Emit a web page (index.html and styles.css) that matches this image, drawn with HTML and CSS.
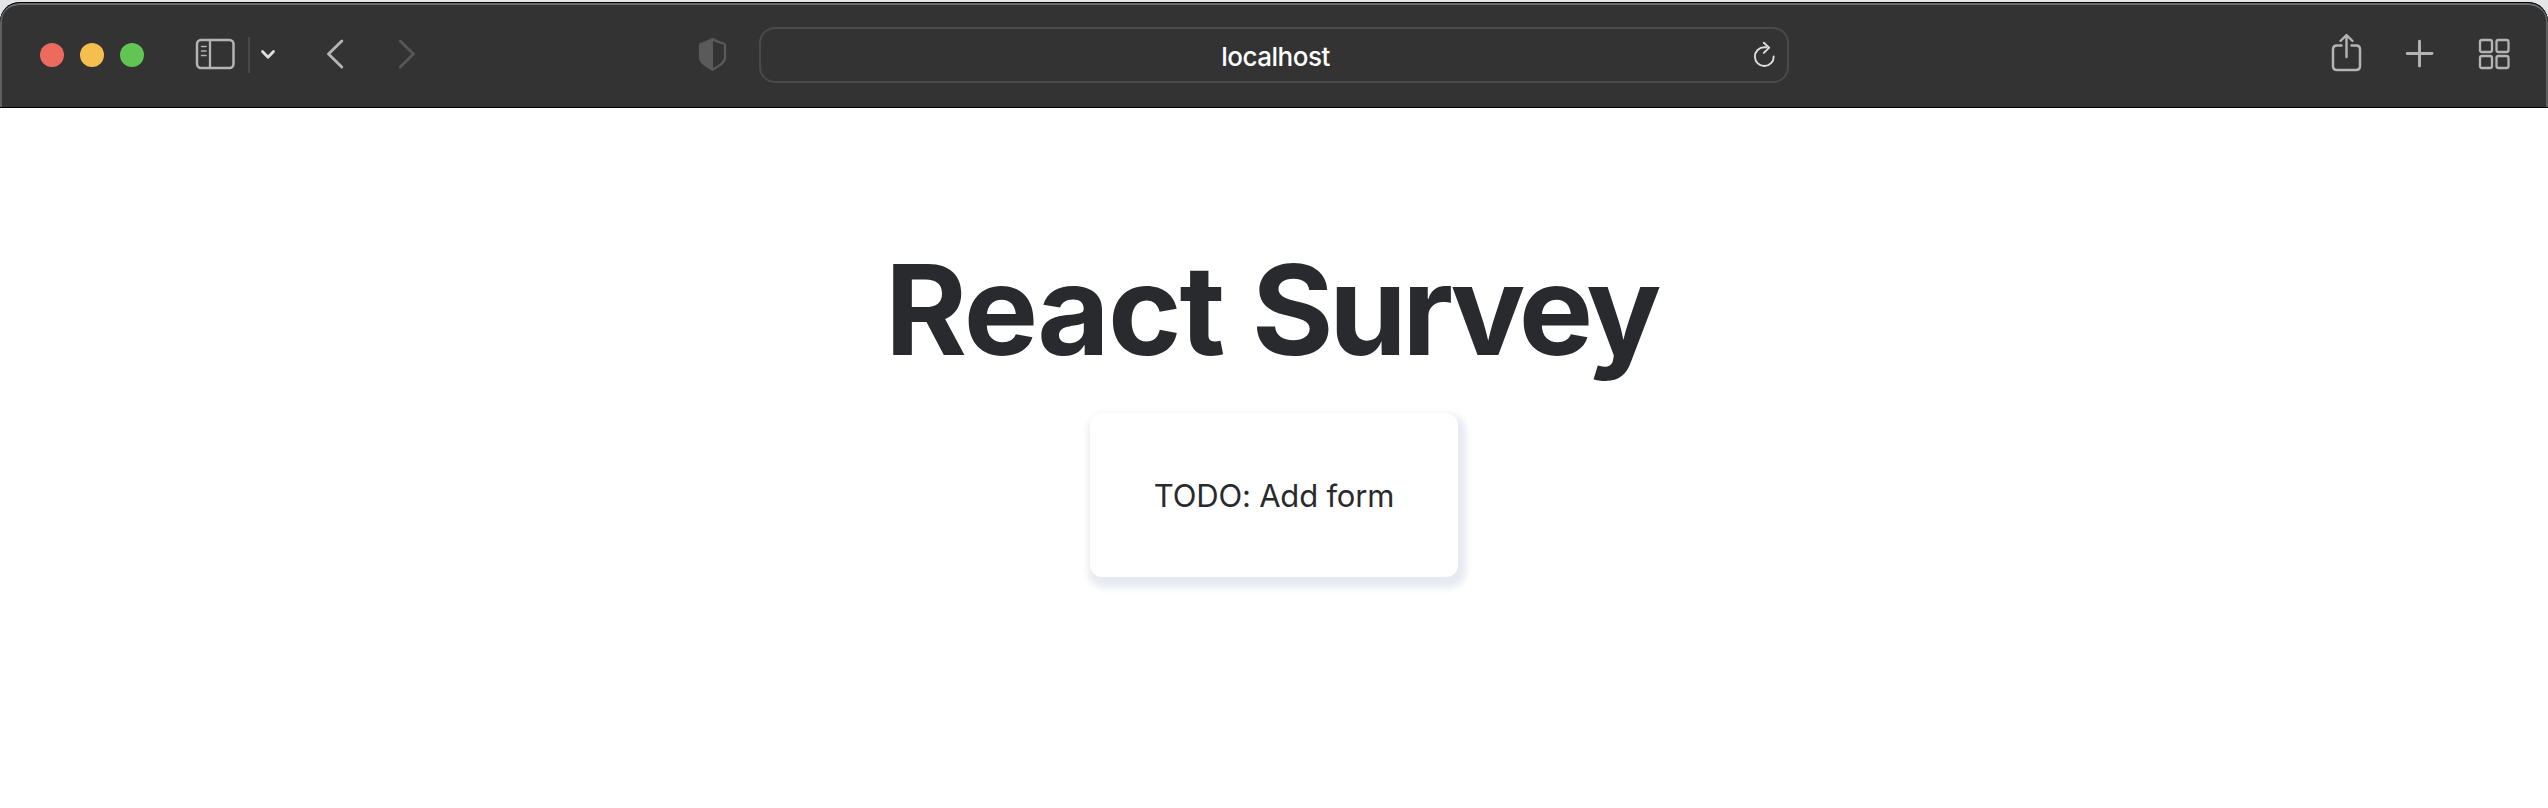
FILE: index.html
```html
<!DOCTYPE html>
<html lang="en">
<head>
<meta charset="utf-8">
<title>React Survey</title>
<link rel="stylesheet" href="styles.css">
</head>
<body>
<div class="frame">
<header class="toolbar">
  <div class="tools-left">
    <div class="lights"><span class="light red"></span><span class="light yellow"></span><span class="light green"></span></div>
    <svg class="icon sidebar" width="40" height="40" viewBox="196 35 40 40"><rect x="197" y="40" width="36.500" height="28" rx="4" stroke-width="2.500"/><path d="M210 40V68" stroke-width="2.300"/><path d="M201.500 46.500H206M201.500 51H206M201.500 55.500H206" stroke-width="1.600"/></svg>
    <span class="divider"></span>
    <svg class="icon chevron" width="16" height="40" viewBox="260 35 16 40"><path d="M262.500 51.500L268 57.300L273.500 51.500" stroke-width="2.800"/></svg>
    <svg class="icon back" width="18" height="40" viewBox="326 35 18 40"><path d="M341.800 41L328.500 54L341.800 67" stroke-width="2.900"/></svg>
    <svg class="icon forward" width="18" height="40" viewBox="398 35 18 40"><path d="M400.200 41L413.500 54L400.200 67" stroke-width="2.900"/></svg>
    <svg class="icon shield" width="28" height="40" viewBox="699 35 28 40"><path d="M712.500 39C716 41.300 720 42.500 724 43.700Q725 44 725 45.500V57.500C725 62.500 719.500 65.500 712.500 69.700C705.500 65.500 700 62.500 700 57.500V45.500Q700 44 701 43.700C705 42.500 709 41.300 712.500 39Z" stroke-width="2.200"/><path class="half" d="M713 38.500C709 41.300 705 42.500 701 43.700Q700 44 700 45.500V57.500C700 62.500 705.500 65.500 713 70Z"/></svg>
  </div>
  <div class="address">
    <span class="host">localhost</span>
    <svg class="icon reload" width="24" height="40" viewBox="1753 35 24 40"><path d="M1766.500 47.200H1764.300A9.400 9.400 0 1 0 1773.700 56.400" stroke-width="1.900"/><path d="M1763.800 42.700L1769.200 47.600L1763.800 52.900" stroke-width="1.900"/></svg>
  </div>
  <div class="tools-right">
    <svg class="icon share" width="30" height="40" viewBox="2332 35 30 40"><path d="M2341.500 45.500H2337Q2333 45.500 2333 49.500V66Q2333 70 2337 70H2356Q2360 70 2360 66V49.500Q2360 45.500 2356 45.500H2351.500" stroke-width="2.500"/><path d="M2346.500 57V35.500M2340.500 41L2346.500 35L2352.500 41" stroke-width="2.400"/></svg>
    <svg class="icon plus" width="28" height="40" viewBox="2406 35 28 40"><path d="M2407.200 53.500H2432M2419.500 41.200V66" stroke-width="2.900"/></svg>
    <svg class="icon tabs" width="32" height="40" viewBox="2479 35 32 40"><g stroke-width="2.300"><rect x="2480" y="40" width="12" height="12" rx="2"/><rect x="2496.500" y="40" width="12" height="12" rx="2"/><rect x="2480" y="56" width="12" height="12" rx="2"/><rect x="2496.500" y="56" width="12" height="12" rx="2"/></g></svg>
  </div>
</header>
</div>
<main class="page">
  <h1 class="title">React <span class="title-end">Survey</span></h1>
  <section class="card"><p class="todo">TODO: Add form</p></section>
</main>
</body>
</html>
```
FILE: styles.css
```css
* { box-sizing: border-box; }
body { margin: 0; height: 808px; overflow: hidden; background: #fff; font-family: Inter, "Liberation Sans", sans-serif; }
.frame { height: 108px; padding-top: 2px; background: #e3e5e6; }
.toolbar {
  display: grid;
  grid-template-columns: 759px 1030px 1fr;
  align-items: center;
  height: 106px;
  background: #333;
  border-radius: 20px 20px 0 0;
  box-shadow: inset 0 1px #000, inset 0 -1px #000, inset 2px 0 #606060, inset -2px 0 #606060, inset 0 3px #6b6b6b;
}
.tools-left, .tools-right { display: flex; align-items: center; }
.lights { display: flex; gap: 16px; margin-left: 40px; }
.light { width: 24px; height: 24px; border-radius: 50%; }
.red { background: #ed6a5e; }
.yellow { background: #f5bf4f; }
.green { background: #61c554; }
.icon { display: block; flex: none; overflow: visible; fill: none; stroke: #b4b4b4; stroke-linecap: round; stroke-linejoin: round; }
.sidebar { margin-left: 52px; }
.divider { width: 2px; height: 36px; margin-left: 12px; background: #484848; }
.chevron { margin-left: 10px; stroke: #dedede; }
.back { margin-left: 50px; }
.forward { margin-left: 54px; stroke: #575757; }
.shield { margin-left: 283px; stroke: #5a5a5a; }
.half { fill: #5a5a5a; stroke: none; }
.address {
  display: grid;
  grid-template-columns: 1fr auto 1fr;
  align-items: center;
  height: 56px;
  border: 2px solid #4a4a4a;
  border-radius: 16px;
}
.host { grid-column: 2; color: #fff; font-size: 26px; font-weight: 500; line-height: 32px; letter-spacing: -0.5px; padding: 4px 0 0 3px; }
.reload { justify-self: end; margin-right: 10px; stroke: #dedede; }
.tools-right { padding-left: 543px; }
.plus { margin-left: 44px; }
.tabs { margin-left: 45px; }
.page { display: flex; flex-direction: column; align-items: center; padding-top: 128px; color: #292a2e; }
.title { margin: 0; padding-right: 5px; font-size: 125px; line-height: 148px; font-weight: 700; letter-spacing: -2px; white-space: nowrap; }
.title-end { margin-left: 1px; margin-right: 1px; letter-spacing: -4.6px; }
.card {
  display: flex;
  align-items: center;
  justify-content: center;
  width: 368px;
  height: 164px;
  margin-top: 29px;
  border-radius: 12px;
  background: #fff;
  box-shadow: 3px 6px 7px 5px #e7eaf1;
}
.todo { margin: 0; padding-top: 2px; font-size: 31px; line-height: 40px; letter-spacing: -0.2px; white-space: nowrap; }
```
